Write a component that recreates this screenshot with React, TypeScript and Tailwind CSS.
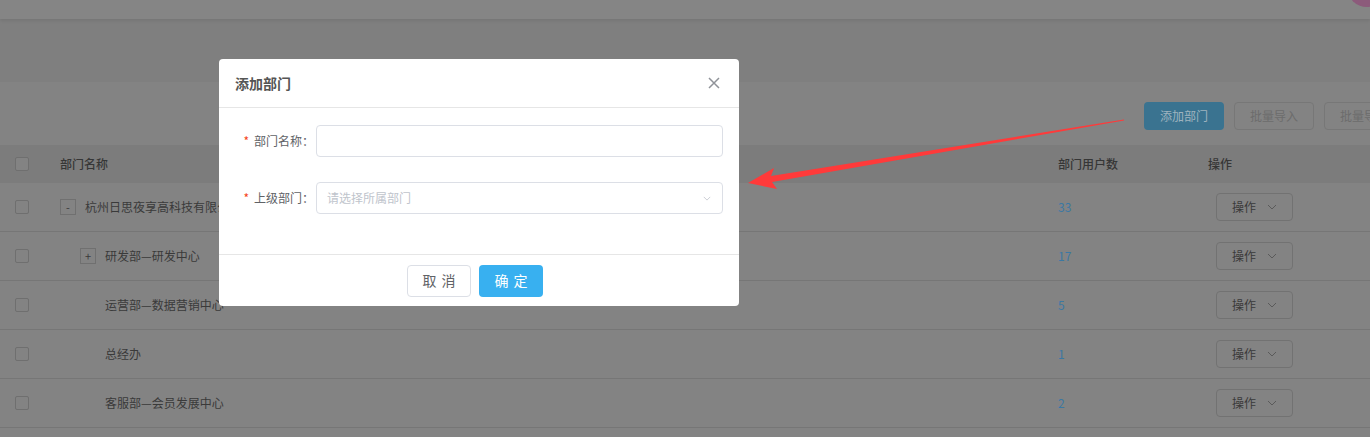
const font = { fontFamily: '"Noto Sans CJK SC", "Liberation Sans", sans-serif' };

const rows = [
  { name: '杭州日思夜享高科技有限公司', count: 33, level: 0, toggle: '-' },
  { name: '研发部—研发中心', count: 17, level: 1, toggle: '+' },
  { name: '运营部—数据营销中心', count: 5, level: 1, toggle: '' },
  { name: '总经办', count: 1, level: 1, toggle: '' },
  { name: '客服部—会员发展中心', count: 2, level: 1, toggle: '' },
];

const Chevron = ({ color, size = 10 }: { color: string; size?: number }) => (
  <svg width={size} height={size / 2 + 1} viewBox="0 0 10 6" fill="none">
    <path d="M1 1l4 4 4-4" stroke={color} strokeWidth="1" />
  </svg>
);

const Checkbox = () => (
  <div className="w-[14px] h-[14px] rounded-[2px] border border-[#6f6f6f] bg-[#838383]" />
);

const Arrow = () => (
  <svg className="absolute left-0 top-0 pointer-events-none" width="1370" height="437">
    <polygon
      points="748,183 777,189 772,182 1124,120.5 1124,119.5 771,176 774,168"
      fill="#ff3a3a"
    />
  </svg>
);

const App = () => {
  return (
    <div className="relative w-[1370px] h-[437px] overflow-hidden bg-[#838383]" style={font}>
      {/* header */}
      <div className="relative z-10 h-[19px] bg-[#858585] shadow-[0_2px_3px_rgba(0,0,0,0.08)]">
        <div className="absolute right-[-17px] top-[-33px] w-[40px] h-[40px] rounded-full bg-[#8c5b7b]" />
      </div>
      <div className="h-[63px] bg-[#7f7f7f]" />

      {/* toolbar */}
      <div className="flex gap-[10px] pl-[1144px] pt-[20px] h-[63px]">
        <div className="shrink-0 w-[80px] h-[28px] rounded-[4px] bg-[#3a7390] text-[#9fb3bf] text-[12px] flex items-center justify-center">
          添加部门
        </div>
        <div className="shrink-0 w-[80px] h-[28px] rounded-[4px] border border-[#777777] text-[#6c6c6c] text-[12px] flex items-center justify-center">
          批量导入
        </div>
        <div className="shrink-0 w-[80px] h-[28px] rounded-[4px] border border-[#777777] text-[#6c6c6c] text-[12px] flex items-center justify-center">
          批量导出
        </div>
      </div>

      {/* table */}
      <div className="grid grid-cols-[60px_998px_150px_1fr] h-[38px] bg-[#7c7c7c] items-center text-[12px] font-medium text-[#363636]">
        <div className="pl-[15px]"><Checkbox /></div>
        <div>部门名称</div>
        <div>部门用户数</div>
        <div>操作</div>
      </div>
      {rows.map((r) => (
        <div
          key={r.name}
          className="grid grid-cols-[60px_998px_150px_1fr] h-[49px] border-b border-[#767676] items-center text-[12px] text-[#3a3a3a]"
        >
          <div className="pl-[15px]"><Checkbox /></div>
          <div className="flex items-center" style={{ paddingLeft: r.level * 20 }}>
            {r.toggle ? (
              <div className="w-[16px] h-[16px] border border-[#707070] flex items-center justify-center text-[11px] leading-none mr-[9px]">
                {r.toggle}
              </div>
            ) : (
              <div className="w-[25px]" />
            )}
            <span>{r.name}</span>
          </div>
          <div className="text-[#3b78a3]">{r.count}</div>
          <div className="pl-[8px]">
            <div className="w-[77px] h-[28px] rounded-[4px] border border-[#727272] flex items-center pl-[15px] gap-[11px]">
              <span>操作</span>
              <Chevron color="#5a5a5a" />
            </div>
          </div>
        </div>
      ))}

      <Arrow />

      {/* modal */}
      <div className="absolute left-[219px] top-[59px] w-[520px] h-[247px] bg-white rounded-[4px] flex flex-col">
        <div className="h-[49px] border-b border-[#e6e6e6] flex items-center justify-between pl-[16px] pr-[19px]">
          <span className="text-[14px] font-bold text-[#555555]">添加部门</span>
          <svg width="12" height="12" viewBox="0 0 12 12">
            <path d="M1 1l10 10M11 1L1 11" stroke="#909399" strokeWidth="1.5" />
          </svg>
        </div>
        <div className="flex-1 pt-[17px] flex flex-col gap-[25px]">
          <div className="flex items-center">
            <div className="w-[97px] pr-[2px] text-right text-[12px] text-[#606266]">
              <span className="text-[#f5431a] mr-[5px]">*</span>部门名称：
            </div>
            <div className="w-[407px] h-[32px] rounded-[4px] border border-[#dcdfe6]" />
          </div>
          <div className="flex items-center">
            <div className="w-[97px] pr-[2px] text-right text-[12px] text-[#606266]">
              <span className="text-[#f5431a] mr-[5px]">*</span>上级部门：
            </div>
            <div className="w-[407px] h-[32px] rounded-[4px] border border-[#dcdfe6] flex items-center justify-between pl-[10px] pr-[11px]">
              <span className="text-[12px] text-[#c0c4cc]">请选择所属部门</span>
              <Chevron color="#c0c4cc" size={8} />
            </div>
          </div>
        </div>
        <div className="h-[52px] border-t border-[#e6e6e6] flex items-center justify-center gap-[8px] pr-[8px]">
          <div className="w-[64px] h-[32px] rounded-[4px] border border-[#dcdfe6] flex items-center justify-center gap-[5px] text-[14px] text-[#606266]">
            <span>取</span>
            <span>消</span>
          </div>
          <div className="w-[64px] h-[32px] rounded-[4px] bg-[#38b0f0] flex items-center justify-center gap-[5px] text-[14px] text-white">
            <span>确</span>
            <span>定</span>
          </div>
        </div>
      </div>
    </div>
  );
};

export default App;
